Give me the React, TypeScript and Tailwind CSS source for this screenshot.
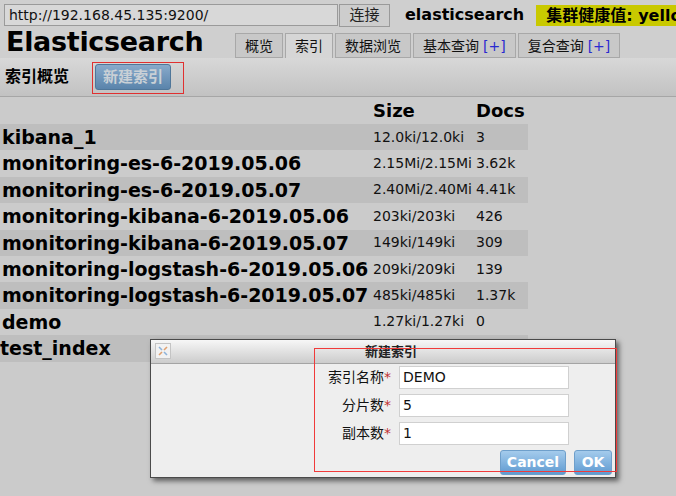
const rows = [
  { name: "kibana_1", size: "12.0ki/12.0ki", docs: "3" },
  { name: "monitoring-es-6-2019.05.06", size: "2.15Mi/2.15Mi", docs: "3.62k" },
  { name: "monitoring-es-6-2019.05.07", size: "2.40Mi/2.40Mi", docs: "4.41k" },
  { name: "monitoring-kibana-6-2019.05.06", size: "203ki/203ki", docs: "426" },
  { name: "monitoring-kibana-6-2019.05.07", size: "149ki/149ki", docs: "309" },
  { name: "monitoring-logstash-6-2019.05.06", size: "209ki/209ki", docs: "139" },
  { name: "monitoring-logstash-6-2019.05.07", size: "485ki/485ki", docs: "1.37k" },
  { name: "demo", size: "1.27ki/1.27ki", docs: "0" },
  { name: "test_index", size: "", docs: "" },
];

const tabs = [
  { label: "概览", plus: false, active: false },
  { label: "索引", plus: false, active: true },
  { label: "数据浏览", plus: false, active: false },
  { label: "基本查询", plus: true, active: false },
  { label: "复合查询", plus: true, active: false },
];

const fields = [
  { label: "索引名称", value: "DEMO" },
  { label: "分片数", value: "5" },
  { label: "副本数", value: "1" },
];

function CloseIcon() {
  return (
    <div className="w-[16px] h-[16px] border border-[#c4c4c4] bg-[#f2f2f2] flex items-center justify-center">
      <svg width="10" height="10" viewBox="0 0 10 10">
        <path d="M1 1 L4 4" stroke="#8fb3d9" strokeWidth="1.6" />
        <path d="M9 1 L6 4" stroke="#e0a070" strokeWidth="1.6" />
        <path d="M1 9 L4 6" stroke="#e0a070" strokeWidth="1.6" />
        <path d="M9 9 L6 6" stroke="#8fb3d9" strokeWidth="1.6" />
      </svg>
    </div>
  );
}

export default function App() {
  return (
    <div className="relative w-[676px] h-[496px] overflow-hidden bg-[#cbcbcb] text-[#000] font-['DejaVu_Sans','Noto_Sans_CJK_SC',sans-serif]">
      {/* header */}
      <div className="h-[58px] bg-[#cfcfcf]">
        <div className="flex items-center h-[27px] pt-[3px] whitespace-nowrap overflow-hidden">
          <div className="shrink-0 ml-[4px] w-[334px] h-[22px] border border-[#9a9a9a] bg-[#d8d8d8] pl-[4px] text-[14px] leading-[20px] text-[#111]">
            http://192.168.45.135:9200/
          </div>
          <div className="shrink-0 ml-[1px] w-[51px] h-[23px] border border-[#9a9a9a] bg-[#cdcdcd] flex items-center justify-center text-[15px] text-[#222]">
            连接
          </div>
          <div className="shrink-0 ml-[15px] text-[16px] font-bold">elasticsearch</div>
          <div className="shrink-0 ml-[12px] h-[21px] bg-[#c9c900] pl-[10px] pr-[4px] text-[16px] leading-[21px] font-bold">
            集群健康值: yellow (13 of 26)
          </div>
        </div>
        <div className="flex items-end h-[31px]">
          <div className="shrink-0 ml-[6px] w-[229px] text-[27px] leading-[30px] font-bold tracking-[-0.3px] self-start">
            Elasticsearch
          </div>
          <div className="flex items-end gap-[2px] h-[25px] whitespace-nowrap">
            {tabs.map((t) => (
              <div
                key={t.label}
                className={
                  t.active
                    ? "shrink-0 h-[25px] px-[9px] border border-b-0 border-[#a8a8a8] bg-[#d6d6d6] text-[14px] leading-[24px] text-[#111]"
                    : "shrink-0 h-[25px] px-[9px] border border-[#a8a8a8] bg-[#c8c8c8] text-[14px] leading-[24px] text-[#111]"
                }
              >
                {t.label}
                {t.plus && <span className="ml-[4px] text-[#2a2ad0]">[+]</span>}
              </div>
            ))}
          </div>
        </div>
      </div>

      {/* toolbar */}
      <div className="h-[39px] flex items-center bg-gradient-to-b from-[#d8d8d8] to-[#c2c2c2] border-b border-[#a6a6a6]">
        <div className="ml-[5px] text-[16px] font-bold">索引概览</div>
        <div className="ml-[26px] w-[76px] h-[26px] rounded-[3px] border border-[#4f7699] bg-gradient-to-b from-[#88aacb] to-[#5a84ab] flex items-center justify-center text-[15px] font-bold text-[#c9d0d6]">
          新建索引
        </div>
      </div>

      {/* table */}
      <div className="w-[528px]">
        <div className="flex h-[27px] items-center text-[18px] font-bold">
          <div className="w-[373px]" />
          <div className="w-[103px]">Size</div>
          <div>Docs</div>
        </div>
        {rows.map((r, i) => (
          <div
            key={r.name}
            className={
              i % 2 === 0
                ? "flex items-center h-[26.4px] bg-[#bebebe] whitespace-nowrap"
                : "flex items-center h-[26.4px] whitespace-nowrap"
            }
          >
            <div className={r.name === "test_index" ? "w-[373px] text-[19px] font-bold" : "w-[373px] pl-[2px] text-[19px] font-bold"}>
              {r.name}
            </div>
            <div className="w-[103px] text-[14px] text-[#111]">{r.size}</div>
            <div className="text-[14px] text-[#111]">{r.docs}</div>
          </div>
        ))}
      </div>

      {/* red marks */}
      <div className="absolute left-[92px] top-[62px] w-[92px] h-[32px] border border-[#e03030]" />

      {/* dialog */}
      <div className="absolute left-[150px] top-[339px] w-[466px] h-[139px] border border-[#4a4a4a] bg-[#eeeeee] shadow-[3px_3px_5px_rgba(0,0,0,0.55)]">
        <div className="relative h-[24px] bg-gradient-to-b from-[#f7f7f7] to-[#cccccc] border-b border-[#a4a4a4] flex items-center justify-center pl-[16px]">
          <div className="absolute left-[4px] top-[3px]">
            <CloseIcon />
          </div>
          <div className="text-[13px] font-bold text-[#222]">新建索引</div>
        </div>
        <div className="pt-[2px]">
          {fields.map((f) => (
            <div key={f.label} className="flex items-center h-[23px] mb-[5px]">
              <div className="w-[240px] text-right text-[14px] text-[#111]">
                {f.label}
                <span className="text-[#c03030]">*</span>
              </div>
              <div className="ml-[8px] w-[170px] h-[23px] border border-[#d0d0d0] bg-white pl-[3px] text-[14px] leading-[21px] text-[#111]">
                {f.value}
              </div>
            </div>
          ))}
          <div className="flex justify-end gap-[8px] pr-[3px] mt-[1px]">
            <div className="w-[66px] h-[25px] rounded-[3px] border border-[#6e9fcb] bg-gradient-to-b from-[#a4cbec] to-[#5f9bd1] flex items-center justify-center text-[14px] font-bold text-white">
              Cancel
            </div>
            <div className="w-[38px] h-[25px] rounded-[3px] border border-[#6e9fcb] bg-gradient-to-b from-[#a4cbec] to-[#5f9bd1] flex items-center justify-center text-[14px] font-bold text-white">
              OK
            </div>
          </div>
        </div>
      </div>
      <div className="absolute left-[314px] top-[348px] w-[303px] h-[124px] border border-[#f03a3a]" />
    </div>
  );
}
